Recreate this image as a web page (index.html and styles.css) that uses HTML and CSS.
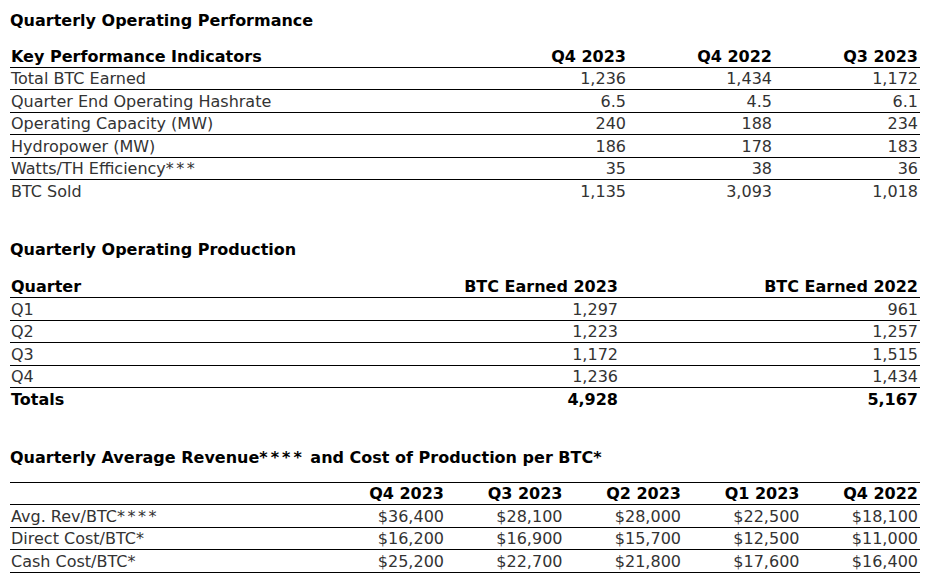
FILE: index.html
```html
<!DOCTYPE html>
<html>
<head>
<meta charset="utf-8">
<link rel="stylesheet" href="styles.css">
</head>
<body>
<div class="page">
  <h2 class="title t1">Quarterly Operating Performance</h2>
  <table class="data kpi">
    <colgroup><col class="c-label"><col class="c-val"><col class="c-val"><col class="c-val"></colgroup>
    <thead>
      <tr><th class="lbl">Key Performance Indicators</th><th>Q4 2023</th><th>Q4 2022</th><th>Q3 2023</th></tr>
    </thead>
    <tbody>
      <tr><td class="lbl">Total BTC Earned</td><td>1,236</td><td>1,434</td><td>1,172</td></tr>
      <tr><td class="lbl">Quarter End Operating Hashrate</td><td>6.5</td><td>4.5</td><td>6.1</td></tr>
      <tr><td class="lbl">Operating Capacity (MW)</td><td>240</td><td>188</td><td>234</td></tr>
      <tr><td class="lbl">Hydropower (MW)</td><td>186</td><td>178</td><td>183</td></tr>
      <tr><td class="lbl">Watts/TH Efficiency<span class="ast">***</span></td><td>35</td><td>38</td><td>36</td></tr>
      <tr class="last"><td class="lbl">BTC Sold</td><td>1,135</td><td>3,093</td><td>1,018</td></tr>
    </tbody>
  </table>

  <h2 class="title t2">Quarterly Operating Production</h2>
  <table class="data prod">
    <colgroup><col class="c-label2"><col class="c-val2"><col class="c-val2"></colgroup>
    <thead>
      <tr><th class="lbl">Quarter</th><th>BTC Earned 2023</th><th>BTC Earned 2022</th></tr>
    </thead>
    <tbody>
      <tr><td class="lbl">Q1</td><td>1,297</td><td>961</td></tr>
      <tr><td class="lbl">Q2</td><td>1,223</td><td>1,257</td></tr>
      <tr><td class="lbl">Q3</td><td>1,172</td><td>1,515</td></tr>
      <tr><td class="lbl">Q4</td><td>1,236</td><td>1,434</td></tr>
      <tr class="last total"><td class="lbl">Totals</td><td>4,928</td><td>5,167</td></tr>
    </tbody>
  </table>

  <h2 class="title t3">Quarterly Average Revenue<span class="ast">****</span> and Cost of Production per BTC<span class="ast">*</span></h2>
  <table class="data cost">
    <colgroup><col class="c-label3"><col class="c-val3"><col class="c-val3"><col class="c-val3"><col class="c-val3"><col class="c-val3"></colgroup>
    <thead>
      <tr class="top"><th class="lbl"></th><th>Q4 2023</th><th>Q3 2023</th><th>Q2 2023</th><th>Q1 2023</th><th>Q4 2022</th></tr>
    </thead>
    <tbody>
      <tr><td class="lbl">Avg. Rev/BTC<span class="ast">****</span></td><td>$36,400</td><td>$28,100</td><td>$28,000</td><td>$22,500</td><td>$18,100</td></tr>
      <tr><td class="lbl">Direct Cost/BTC<span class="ast">*</span></td><td>$16,200</td><td>$16,900</td><td>$15,700</td><td>$12,500</td><td>$11,000</td></tr>
      <tr><td class="lbl">Cash Cost/BTC<span class="ast">*</span></td><td>$25,200</td><td>$22,700</td><td>$21,800</td><td>$17,600</td><td>$16,400</td></tr>
    </tbody>
  </table>
</div>
</body>
</html>
```

FILE: styles.css
```css
html, body {
  margin: 0;
  padding: 0;
  background: #ffffff;
}

body {
  font-family: "DejaVu Sans", Verdana, sans-serif;
  font-size: 16px;
  color: #333333;
}

.page {
  width: 910px;
  padding: 0 5px 0 10px;
}

.title {
  margin: 0;
  font-size: 16px;
  line-height: 18px;
  font-weight: bold;
  color: #000000;
}

.t1 { padding-top: 12px; }
.t2 { margin-top: 39px; }
.t3 { margin-top: 39px; }

.data {
  width: 910px;
  border-collapse: collapse;
  table-layout: fixed;
}

.kpi { margin-top: 15px; }
.prod { margin-top: 17px; }
.cost { margin-top: 15px; }

.c-label { width: 472px; }
.c-val { width: 146px; }
.c-label2 { width: 310px; }
.c-val2 { width: 300px; }
.c-label3 { width: 317.5px; }
.c-val3 { width: 118.5px; }

.data th,
.data td {
  padding: 2.5px 2px 1px 1px;
  line-height: 18px;
  text-align: right;
  white-space: nowrap;
  border-bottom: 1px solid #000000;
}

.data th {
  font-weight: bold;
  color: #000000;
}

.data .lbl {
  text-align: left;
}

.data tr.last td {
  border-bottom: none;
}

.data tr.top th {
  border-top: 1px solid #000000;
}

.data tr.total td {
  font-weight: bold;
  color: #000000;
}

.ast {
  letter-spacing: 2.5px;
}

.title .ast {
  letter-spacing: 3px;
}
```
